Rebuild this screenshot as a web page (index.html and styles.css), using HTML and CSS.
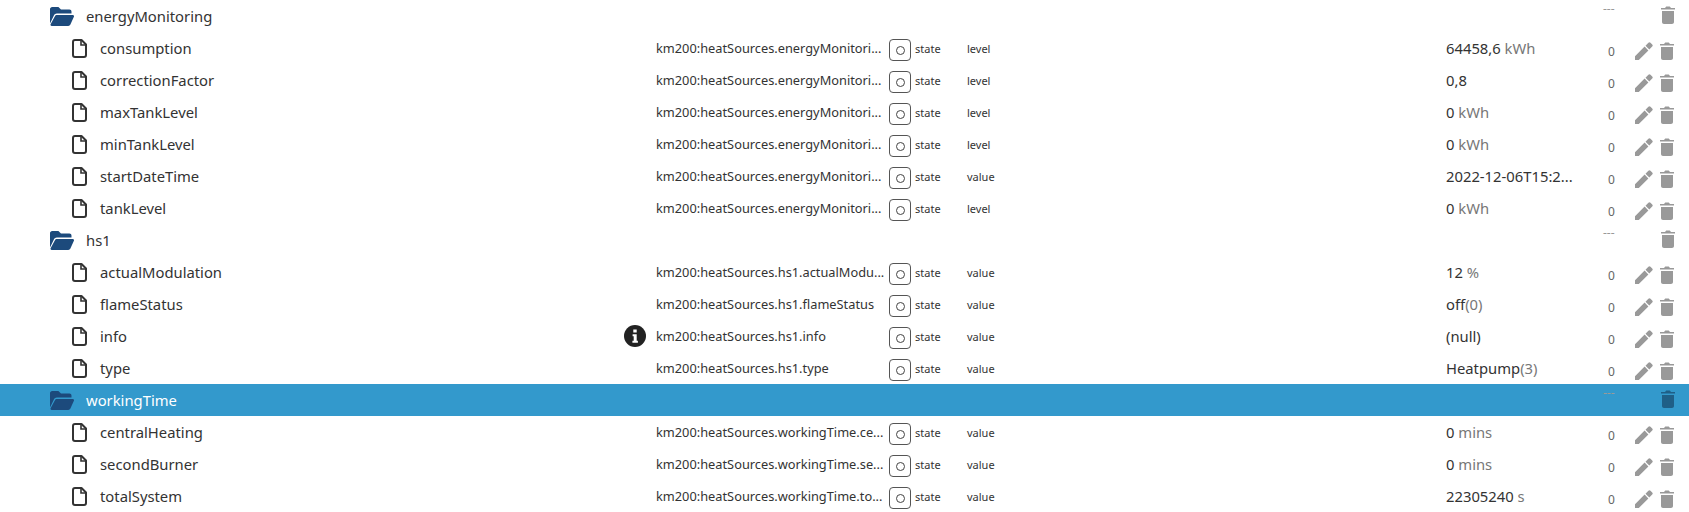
FILE: index.html
```html
<!DOCTYPE html>
<html lang="en">
<head>
    <meta charset="UTF-8">
    <title>Objects</title>
    <link rel="stylesheet" href="styles.css">
</head>
<body>
    <svg class="sprites" width="0" height="0">
        <symbol id="i-folder" viewBox="0 0 24 19"><path d="M2.2 0h6.2l2.6 2.6h8.4c1.2 0 2.1.9 2.1 2.1v1.8H6.8c-1.2 0-2.3.7-2.8 1.8L0 16.6V2.2C0 1 1 0 2.2 0zM6.4 8h16.4c.9 0 1.5.9 1.1 1.7l-3.5 7.9c-.4.9-1.2 1.4-2.1 1.4H1.6c-.9 0-1.4-.9-1-1.7l4.6-8.5C5.4 8.3 5.9 8 6.4 8z"/></symbol>
        <symbol id="i-file" viewBox="0 0 15 19"><path fill="none" stroke="currentColor" stroke-width="2" stroke-linejoin="round" d="M3 1h6.5L14 5.5V16a2 2 0 0 1-2 2H3a2 2 0 0 1-2-2V3a2 2 0 0 1 2-2z"/><path fill="none" stroke="currentColor" stroke-width="1.6" d="M9 1v5h5"/></symbol>
        <symbol id="i-pencil" viewBox="0 0 18 18"><path d="M0 14.2V18h3.8L13.4 8.4 9.6 4.6zM14.3 7.5l2.9-2.9c.7-.7.7-1.4 0-2.1L15.5.8c-.7-.7-1.4-.7-2.1 0l-2.9 2.9z"/></symbol>
        <symbol id="i-trash" viewBox="0 0 14 18"><path d="M1 5h12v11c0 1.1-.9 2-2 2H3c-1.1 0-2-.9-2-2zM0 2h4l1-1.2c.1-.2.4-.3.6-.3h2.8c.2 0 .5.1.6.3L10 2h4v1.6H0z"/></symbol>
        <symbol id="i-info" viewBox="0 0 22 22"><circle cx="11" cy="11" r="11"/><path fill="#fff" d="M9.3 4.5h3.4v3H9.3zM8.6 9.2h4.1v6.6h1.2v2H8.4v-2h1.3v-4.6H8.6z"/></symbol>
    </svg>

    <div class="tree">
        <div class="row folder">
            <div class="name"><svg class="ico-folder"><use href="#i-folder"/></svg>energyMonitoring</div>
            <div></div><div></div><div></div><div></div><div></div><div></div>
            <div class="num dash">---</div>
            <div class="actions"><svg class="ico-trash"><use href="#i-trash"/></svg></div>
        </div>
        <div class="row">
            <div class="name"><svg class="ico-file"><use href="#i-file"/></svg>consumption</div>
            <div></div>
            <div class="oid">km200:heatSources.energyMonitori...</div>
            <div><span class="type-btn"><span class="ring"></span></span></div>
            <div class="small">state</div>
            <div class="small">level</div>
            <div class="val">64458,6 <span class="unit">kWh</span></div>
            <div class="num">0</div>
            <div class="actions"><svg class="ico-pencil"><use href="#i-pencil"/></svg><svg class="ico-trash"><use href="#i-trash"/></svg></div>
        </div>
        <div class="row">
            <div class="name"><svg class="ico-file"><use href="#i-file"/></svg>correctionFactor</div>
            <div></div>
            <div class="oid">km200:heatSources.energyMonitori...</div>
            <div><span class="type-btn"><span class="ring"></span></span></div>
            <div class="small">state</div>
            <div class="small">level</div>
            <div class="val">0,8</div>
            <div class="num">0</div>
            <div class="actions"><svg class="ico-pencil"><use href="#i-pencil"/></svg><svg class="ico-trash"><use href="#i-trash"/></svg></div>
        </div>
        <div class="row">
            <div class="name"><svg class="ico-file"><use href="#i-file"/></svg>maxTankLevel</div>
            <div></div>
            <div class="oid">km200:heatSources.energyMonitori...</div>
            <div><span class="type-btn"><span class="ring"></span></span></div>
            <div class="small">state</div>
            <div class="small">level</div>
            <div class="val">0 <span class="unit">kWh</span></div>
            <div class="num">0</div>
            <div class="actions"><svg class="ico-pencil"><use href="#i-pencil"/></svg><svg class="ico-trash"><use href="#i-trash"/></svg></div>
        </div>
        <div class="row">
            <div class="name"><svg class="ico-file"><use href="#i-file"/></svg>minTankLevel</div>
            <div></div>
            <div class="oid">km200:heatSources.energyMonitori...</div>
            <div><span class="type-btn"><span class="ring"></span></span></div>
            <div class="small">state</div>
            <div class="small">level</div>
            <div class="val">0 <span class="unit">kWh</span></div>
            <div class="num">0</div>
            <div class="actions"><svg class="ico-pencil"><use href="#i-pencil"/></svg><svg class="ico-trash"><use href="#i-trash"/></svg></div>
        </div>
        <div class="row">
            <div class="name"><svg class="ico-file"><use href="#i-file"/></svg>startDateTime</div>
            <div></div>
            <div class="oid">km200:heatSources.energyMonitori...</div>
            <div><span class="type-btn"><span class="ring"></span></span></div>
            <div class="small">state</div>
            <div class="small">value</div>
            <div class="val">2022-12-06T15:2...</div>
            <div class="num">0</div>
            <div class="actions"><svg class="ico-pencil"><use href="#i-pencil"/></svg><svg class="ico-trash"><use href="#i-trash"/></svg></div>
        </div>
        <div class="row">
            <div class="name"><svg class="ico-file"><use href="#i-file"/></svg>tankLevel</div>
            <div></div>
            <div class="oid">km200:heatSources.energyMonitori...</div>
            <div><span class="type-btn"><span class="ring"></span></span></div>
            <div class="small">state</div>
            <div class="small">level</div>
            <div class="val">0 <span class="unit">kWh</span></div>
            <div class="num">0</div>
            <div class="actions"><svg class="ico-pencil"><use href="#i-pencil"/></svg><svg class="ico-trash"><use href="#i-trash"/></svg></div>
        </div>
        <div class="row folder">
            <div class="name"><svg class="ico-folder"><use href="#i-folder"/></svg>hs1</div>
            <div></div><div></div><div></div><div></div><div></div><div></div>
            <div class="num dash">---</div>
            <div class="actions"><svg class="ico-trash"><use href="#i-trash"/></svg></div>
        </div>
        <div class="row">
            <div class="name"><svg class="ico-file"><use href="#i-file"/></svg>actualModulation</div>
            <div></div>
            <div class="oid">km200:heatSources.hs1.actualModu...</div>
            <div><span class="type-btn"><span class="ring"></span></span></div>
            <div class="small">state</div>
            <div class="small">value</div>
            <div class="val">12 <span class="unit">%</span></div>
            <div class="num">0</div>
            <div class="actions"><svg class="ico-pencil"><use href="#i-pencil"/></svg><svg class="ico-trash"><use href="#i-trash"/></svg></div>
        </div>
        <div class="row">
            <div class="name"><svg class="ico-file"><use href="#i-file"/></svg>flameStatus</div>
            <div></div>
            <div class="oid">km200:heatSources.hs1.flameStatus</div>
            <div><span class="type-btn"><span class="ring"></span></span></div>
            <div class="small">state</div>
            <div class="small">value</div>
            <div class="val">off<span class="unit">(0)</span></div>
            <div class="num">0</div>
            <div class="actions"><svg class="ico-pencil"><use href="#i-pencil"/></svg><svg class="ico-trash"><use href="#i-trash"/></svg></div>
        </div>
        <div class="row">
            <div class="name"><svg class="ico-file"><use href="#i-file"/></svg>info</div>
            <div class="info"><svg class="ico-info"><use href="#i-info"/></svg></div>
            <div class="oid">km200:heatSources.hs1.info</div>
            <div><span class="type-btn"><span class="ring"></span></span></div>
            <div class="small">state</div>
            <div class="small">value</div>
            <div class="val">(null)</div>
            <div class="num">0</div>
            <div class="actions"><svg class="ico-pencil"><use href="#i-pencil"/></svg><svg class="ico-trash"><use href="#i-trash"/></svg></div>
        </div>
        <div class="row">
            <div class="name"><svg class="ico-file"><use href="#i-file"/></svg>type</div>
            <div></div>
            <div class="oid">km200:heatSources.hs1.type</div>
            <div><span class="type-btn"><span class="ring"></span></span></div>
            <div class="small">state</div>
            <div class="small">value</div>
            <div class="val">Heatpump<span class="unit">(3)</span></div>
            <div class="num">0</div>
            <div class="actions"><svg class="ico-pencil"><use href="#i-pencil"/></svg><svg class="ico-trash"><use href="#i-trash"/></svg></div>
        </div>
        <div class="row folder selected">
            <div class="name"><svg class="ico-folder"><use href="#i-folder"/></svg>workingTime</div>
            <div></div><div></div><div></div><div></div><div></div><div></div>
            <div class="num dash">---</div>
            <div class="actions"><svg class="ico-trash"><use href="#i-trash"/></svg></div>
        </div>
        <div class="row">
            <div class="name"><svg class="ico-file"><use href="#i-file"/></svg>centralHeating</div>
            <div></div>
            <div class="oid">km200:heatSources.workingTime.ce...</div>
            <div><span class="type-btn"><span class="ring"></span></span></div>
            <div class="small">state</div>
            <div class="small">value</div>
            <div class="val">0 <span class="unit">mins</span></div>
            <div class="num">0</div>
            <div class="actions"><svg class="ico-pencil"><use href="#i-pencil"/></svg><svg class="ico-trash"><use href="#i-trash"/></svg></div>
        </div>
        <div class="row">
            <div class="name"><svg class="ico-file"><use href="#i-file"/></svg>secondBurner</div>
            <div></div>
            <div class="oid">km200:heatSources.workingTime.se...</div>
            <div><span class="type-btn"><span class="ring"></span></span></div>
            <div class="small">state</div>
            <div class="small">value</div>
            <div class="val">0 <span class="unit">mins</span></div>
            <div class="num">0</div>
            <div class="actions"><svg class="ico-pencil"><use href="#i-pencil"/></svg><svg class="ico-trash"><use href="#i-trash"/></svg></div>
        </div>
        <div class="row">
            <div class="name"><svg class="ico-file"><use href="#i-file"/></svg>totalSystem</div>
            <div></div>
            <div class="oid">km200:heatSources.workingTime.to...</div>
            <div><span class="type-btn"><span class="ring"></span></span></div>
            <div class="small">state</div>
            <div class="small">value</div>
            <div class="val">22305240 <span class="unit">s</span></div>
            <div class="num">0</div>
            <div class="actions"><svg class="ico-pencil"><use href="#i-pencil"/></svg><svg class="ico-trash"><use href="#i-trash"/></svg></div>
        </div>
    </div>
</body>
</html>
```

FILE: styles.css
```css
body {
    margin: 0;
    background-color: #fff;
    color: #333;
    font-family: "Noto Sans", "Open Sans", sans-serif;
    font-size: 14.8px;
    overflow: hidden;
}
.sprites {
    display: block;
    height: 0;
}
.row {
    display: grid;
    grid-template-columns: 624px 32px 233px 26px 52px 479px 162px 27px 1fr;
    align-items: center;
    height: 32px;
}
.name {
    display: flex;
    align-items: center;
    padding-left: 72px;
    white-space: nowrap;
}
.ico-file {
    width: 15px;
    height: 19px;
    margin-right: 13px;
    color: #333;
    flex: none;
}
.folder .name {
    padding-left: 50px;
}
.ico-folder {
    width: 24px;
    height: 19px;
    margin-right: 12px;
    fill: #1c4a7c;
    flex: none;
}
.selected {
    background-color: #3399cc;
}
.selected .name {
    color: #fff;
}
.info {
    display: flex;
}
.ico-info {
    width: 22px;
    height: 22px;
    fill: #222;
}
.oid {
    font-size: 12.8px;
    white-space: nowrap;
}
.type-btn {
    display: flex;
    align-items: center;
    justify-content: center;
    box-sizing: border-box;
    width: 22px;
    height: 22px;
    border: 1.5px solid #555;
    border-radius: 4px;
    margin-top: 4px;
}
.ring {
    width: 7px;
    height: 7px;
    border: 1.5px solid #444;
    border-radius: 50%;
}
.small {
    font-size: 11px;
    margin-top: 1px;
}
.val {
    white-space: nowrap;
}
.unit {
    color: #777;
}
.num {
    font-size: 12px;
    color: #666;
    margin-top: 6px;
}
.dash {
    margin: -15px 0 0 -5px;
    color: #999;
}
.actions {
    display: flex;
    align-items: center;
    margin-top: 6px;
}
.ico-pencil {
    width: 18px;
    height: 18px;
    margin-right: 7px;
    fill: #999;
}
.ico-trash {
    width: 14px;
    height: 18px;
    fill: #999;
}
.folder .actions {
    margin: -2px 0 0 26px;
}
.selected .ico-trash {
    fill: #1f5f87;
}
```
